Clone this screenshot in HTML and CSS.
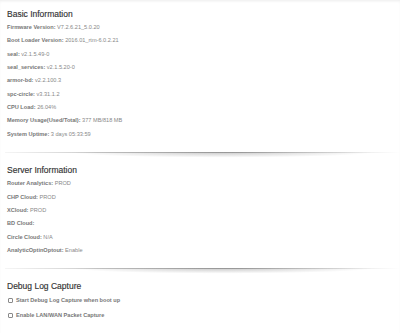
FILE: index.html
```html
<!DOCTYPE html>
<html lang="en">
<head>
  <meta charset="UTF-8">
  <meta name="viewport" content="width=device-width, initial-scale=1.0">
  <title>Status</title>
  <link rel="stylesheet" href="styles.css">
</head>
<body>
  <div class="page">

    <!-- Basic info -->
    <section class="section">
      <h2>Basic Information</h2>
      <p class="row"><b>Firmware Version:</b> V7.2.6.21_5.0.20</p>
      <p class="row"><b>Boot Loader Version:</b> 2016.01_rtm-6.0.2.21</p>
      <p class="row"><b>seal:</b> v2.1.5.49-0</p>
      <p class="row"><b>seal_services:</b> v2.1.5.20-0</p>
      <p class="row"><b>armor-bd:</b> v2.2.100.3</p>
      <p class="row"><b>spc-circle:</b> v3.31.1.2</p>
      <p class="row"><b>CPU Load:</b> 26.04%</p>
      <p class="row"><b>Memory Usage(Used/Total):</b> 377 MB/818 MB</p>
      <p class="row"><b>System Uptime:</b> 3 days 05:33:59</p>
    </section>

    <div class="divider"></div>

    <!-- Server info -->
    <section class="section">
      <h2>Server Information</h2>
      <p class="row"><b>Router Analytics:</b> PROD</p>
      <p class="row"><b>CHP Cloud:</b> PROD</p>
      <p class="row"><b>XCloud:</b> PROD</p>
      <p class="row"><b>BD Cloud:</b></p>
      <p class="row"><b>Circle Cloud:</b> N/A</p>
      <p class="row"><b>AnalyticOptinOptout:</b> Enable</p>
    </section>

    <div class="divider"></div>

    <!-- Debug -->
    <section class="section">
      <h2>Debug Log Capture</h2>
      <label class="check"><input type="checkbox"> <b>Start Debug Log Capture when boot up</b></label>
      <label class="check"><input type="checkbox"> <b>Enable LAN/WAN Packet Capture</b></label>
    </section>

  </div>
</body>
</html>
```

FILE: styles.css
```css
html, body {
  margin: 0;
  padding: 0;
  background: #fff;
}

.page {
  min-height: 333px;
  padding-top: 9px;
  font-family: "Liberation Sans", Arial, sans-serif;
  box-shadow: inset 0 2px 3px -1px rgba(0, 0, 0, 0.08);
}

.section {
  padding: 0 7px;
}

.section h2 {
  margin: 0 0 2.2px;
  font-size: 8.5px;
  line-height: 10px;
  font-weight: 400;
  color: #333;
  -webkit-text-stroke: 0.15px #333;
}

.row {
  margin: 0;
  font-size: 5.6px;
  line-height: 13.3px;
  color: #888;
}

.row b,
.check b {
  font-weight: 700;
  color: #777;
}

/* line with soft shadow under it */
.divider {
  height: 8px;
  margin: 10.8px 0 5.5px 5px;
  background:
    linear-gradient(to right, rgba(0,0,0,0.04), rgba(0,0,0,0.22) 25%, rgba(0,0,0,0.26) 60%, rgba(0,0,0,0.12) 85%, rgba(0,0,0,0)) top / 100% 1px no-repeat,
    radial-gradient(ellipse 55% 100% at 55% 0, rgba(0,0,0,0.22), rgba(0,0,0,0) 70%);
}

.check {
  display: flex;
  align-items: center;
  gap: 3px;
  height: 15px;
  font-size: 5.6px;
  color: #777;
}

.check:first-of-type {
  margin-top: -1px;
}

.check input {
  appearance: none;
  margin: 0 0 0 1px;
  width: 5px;
  height: 5px;
  border: 0.6px solid #8a8a8a;
  border-radius: 1px;
  background: #fff;
}
```
